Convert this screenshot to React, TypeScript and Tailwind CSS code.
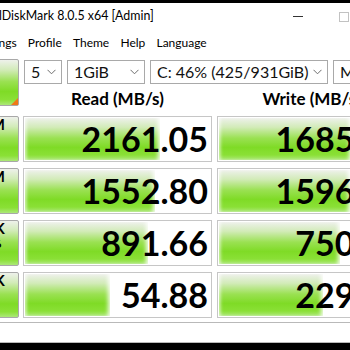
import React from 'react'

type Row = { label: [string, string]; read: number; write: number }

const ROWS: Row[] = [
  { label: ['SEQ1M', 'Q8T1'], read: 2161.05, write: 1685.43 },
  { label: ['SEQ1M', 'Q1T1'], read: 1552.8, write: 1596.72 },
  { label: ['RND4K', 'Q32T16'], read: 891.66, write: 750.61 },
  { label: ['RND4K', 'Q1T1'], read: 54.88, write: 229.34 },
]

const MENU = ['File', 'Settings', 'Profile', 'Theme', 'Help', 'Language']

// log scale, same as the meter in the app
const barWidth = (v: number) => Math.max(0, Math.min(185, 31.3 * Math.log10(v) + 30.6))

const GREEN =
  'bg-[linear-gradient(to_bottom,#eef1eb_0%,#d2ebb8_22%,#9ae152_48%,#7fdb26_70%,#8ae036_88%,#ace878_100%)]'

function Chevron() {
  return (
    <svg width="9" height="6" viewBox="0 0 9 6" className="shrink-0">
      <path d="M0.5 0.8 L4.5 4.8 L8.5 0.8" fill="none" stroke="#6d6d6d" strokeWidth="1" />
    </svg>
  )
}

function Select({ value, width }: { value: string; width: string }) {
  return (
    <div className={`${width} flex h-[24px] items-center justify-between border border-[#a9a9a9] bg-white pl-[6px] pr-[5px] text-[16px] leading-none text-[#111]`}>
      <span className="whitespace-nowrap">{value}</span>
      <Chevron />
    </div>
  )
}

function Meter({ value }: { value: number }) {
  return (
    <div className="relative h-full w-[189px] border border-[#c6c6c6] bg-white">
      <div
        className={`absolute bottom-px left-px top-px ${GREEN} shadow-[inset_3px_0_3px_-1px_rgba(255,255,255,0.55),inset_-4px_0_4px_-2px_rgba(255,255,255,0.9)]`}
        style={{ width: barWidth(value) }}
      />
      <div className="relative flex h-full items-center justify-end pr-[3px] text-[34px] font-bold leading-none text-black">
        {value.toFixed(2)}
      </div>
    </div>
  )
}

export default function App() {
  return (
    <div className="h-[350px] w-[350px] overflow-hidden bg-black pt-[3px] font-['Lato','Noto_Sans',sans-serif]">
      <div className="-ml-[66px] flex h-[340px] w-[479px] flex-col bg-white">
        {/* Title bar */}
        <div className="flex h-[27px] shrink-0 items-center">
          <svg width="16" height="16" viewBox="0 0 16 16" className="ml-[6px]">
            <rect x="1" y="2" width="14" height="12" rx="2" fill="#3a8ee6" />
            <circle cx="8" cy="8" r="3.5" fill="#fff" />
          </svg>
          <span className="ml-[8px] whitespace-nowrap text-[12.4px] text-black">CrystalDiskMark 8.0.5 x64 [Admin]</span>
          <div className="ml-auto flex h-full">
            <div className="flex w-[46px] items-center justify-center">
              <div className="h-px w-[10px] bg-[#333]" />
            </div>
            <div className="flex w-[46px] items-center justify-center">
              <div className="h-[10px] w-[10px] border border-[#c2c2c2]" />
            </div>
            <div className="flex w-[46px] items-center justify-center text-[14px] text-black">✕</div>
          </div>
        </div>

        {/* Menu */}
        <div className="flex h-[25px] shrink-0 items-center pl-[5px] text-[12px] text-black">
          {MENU.map((m) => (
            <span key={m} className="px-[5.6px]">{m}</span>
          ))}
        </div>

        {/* Controls + headers */}
        <div className="mt-[4px] flex pl-[5px]">
          <div className={`relative h-[47px] w-[80px] rounded-[2px] border border-[#a8a8a8] ${GREEN}`}>
            <div className="flex h-full items-center justify-center text-[15px] font-bold text-black">All</div>
            <div className="absolute bottom-0 right-0 h-0 w-0 border-b-[7px] border-l-[7px] border-b-[#f07818] border-l-transparent" />
          </div>
          <div className="ml-[5px] flex flex-col">
            <div className="mt-px flex gap-[5px]">
              <Select value="5" width="w-[38px]" />
              <Select value="1GiB" width="w-[78px]" />
              <Select value="C: 46% (425/931GiB)" width="w-[178px]" />
              <Select value="MB/s" width="w-[60px]" />
            </div>
            <div className="flex h-[27px] items-center pt-[3px] text-[17px] font-bold text-black">
              <div className="-ml-px w-[189px] text-center">Read (MB/s)</div>
              <div className="ml-[5px] w-[189px] text-center">Write (MB/s)</div>
            </div>
          </div>
        </div>

        {/* Results */}
        <div className="mt-[5px] flex flex-col gap-[6px] pl-[5px]">
          {ROWS.map((r) => (
            <div key={r.label.join()} className="flex h-[46px]">
              <div className={`flex h-full w-[80px] flex-col items-center justify-start rounded-[2px] border border-[#a8a8a8] ${GREEN} font-bold text-black`}>
                <span className="text-[15px] leading-[15px]">{r.label[0]}</span>
                <span className="text-[12px] leading-[15px]">{r.label[1]}</span>
              </div>
              <div className="ml-[4px] h-full">
                <Meter value={r.read} />
              </div>
              <div className="ml-[5px] h-full">
                <Meter value={r.write} />
              </div>
            </div>
          ))}
        </div>

        {/* Comment */}
        <div className="mt-[4px] ml-[5px] h-[25px] w-[463px] border border-[#b9b9b9] bg-white" />
      </div>
    </div>
  )
}
